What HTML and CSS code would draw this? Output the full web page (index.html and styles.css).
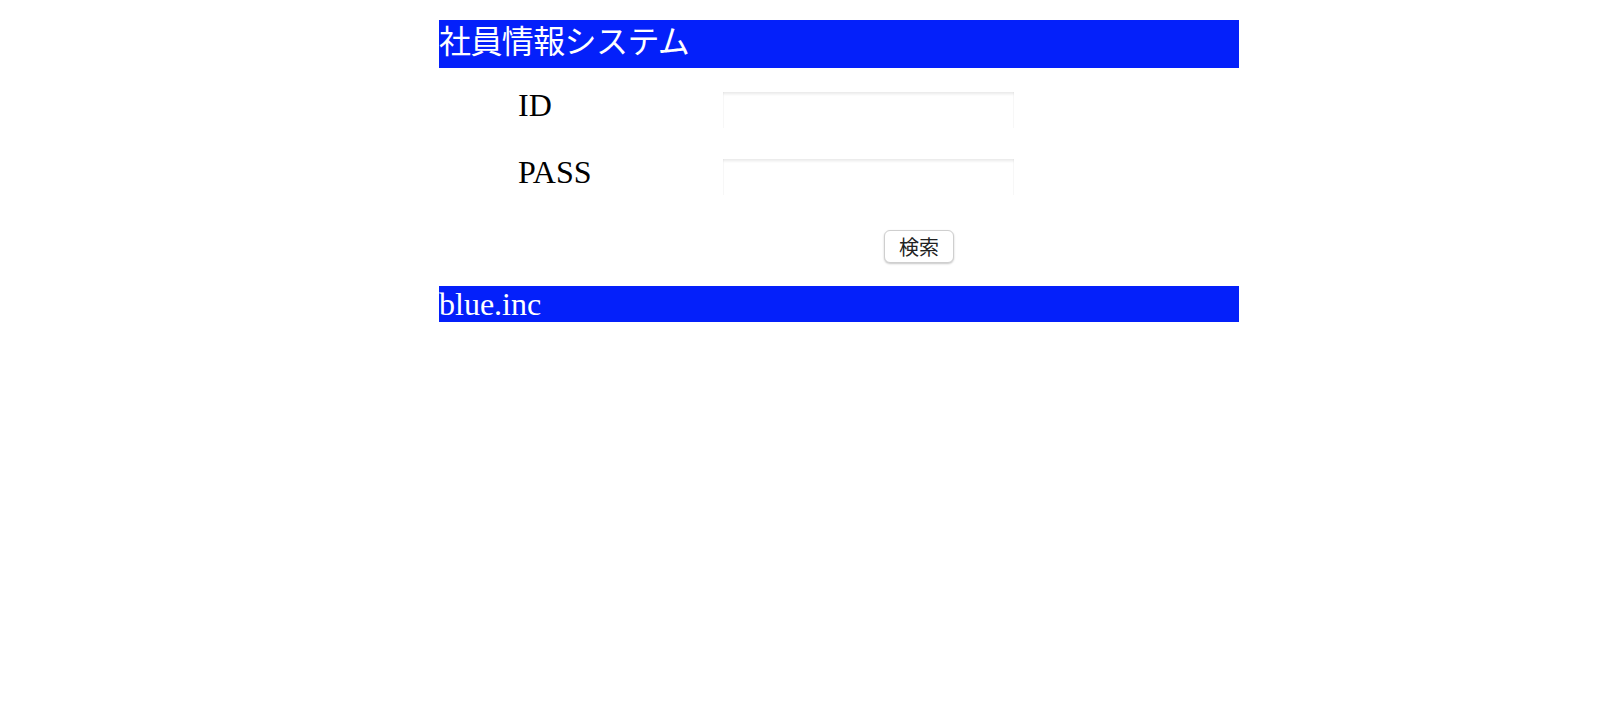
FILE: index.html
```html
<!DOCTYPE html>
<html lang="ja">
<head>
<meta charset="utf-8">
<title>社員情報システム</title>
<link rel="stylesheet" href="styles.css">
</head>
<body>
<div class="page">
  <h1 class="header">社員情報システム</h1>
  <form class="login">
    <div class="row">
      <label class="label" for="uid">ID</label>
      <input class="field" id="uid" type="text">
    </div>
    <div class="row">
      <label class="label" for="pass">PASS</label>
      <input class="field" id="pass" type="password">
    </div>
    <div class="actions">
      <button class="btn" type="button">検索</button>
    </div>
  </form>
  <footer class="footer">blue.inc</footer>
</div>
</body>
</html>
```

FILE: styles.css
```css
html, body {
  margin: 0;
  padding: 0;
  background: #ffffff;
}

body {
  font-family: "Liberation Serif", "Noto Sans CJK JP", serif;
  color: #000;
}

.page {
  width: 800px;
  margin: 20px 0 0 439px;
}

.header {
  margin: 0;
  height: 48px;
  box-sizing: border-box;
  padding-top: 2px;
  background: #0420fa;
  color: #fff;
  font-family: "Liberation Serif", "Noto Sans CJK JP", serif;
  font-size: 32px;
  font-weight: normal;
  line-height: 40px;
  letter-spacing: -0.6px;
}

.login {
  margin: 0;
  padding-top: 19px;
}

.row {
  display: flex;
  align-items: flex-start;
  height: 67px;
  padding-left: 79px;
}

.label {
  width: 205px;
  font-size: 32px;
  line-height: normal;
}

.field {
  margin-top: 5px;
  width: 291px;
  height: 36px;
  box-sizing: border-box;
  border: none;
  outline: none;
  padding: 0;
  background: #fff;
  box-shadow: inset 0 3px 3px -1px rgba(0, 0, 0, 0.09), inset 1px 0 0 rgba(0, 0, 0, 0.02), inset -1px 0 0 rgba(0, 0, 0, 0.02);
}

.actions {
  display: flex;
  padding-left: 445px;
  padding-top: 9px;
}

.btn {
  width: 70px;
  height: 33px;
  box-sizing: border-box;
  padding: 0;
  border: 1px solid #cfcfcf;
  border-radius: 6px;
  background: #fff;
  box-shadow: 0 1px 2px rgba(0, 0, 0, 0.22);
  color: #222;
  font-family: "Noto Sans CJK JP", sans-serif;
  font-size: 20px;
  line-height: 29px;
}

.footer {
  margin-top: 23px;
  height: 36px;
  background: #0420fa;
  color: #fff;
  font-size: 32px;
  line-height: 36px;
}
```
